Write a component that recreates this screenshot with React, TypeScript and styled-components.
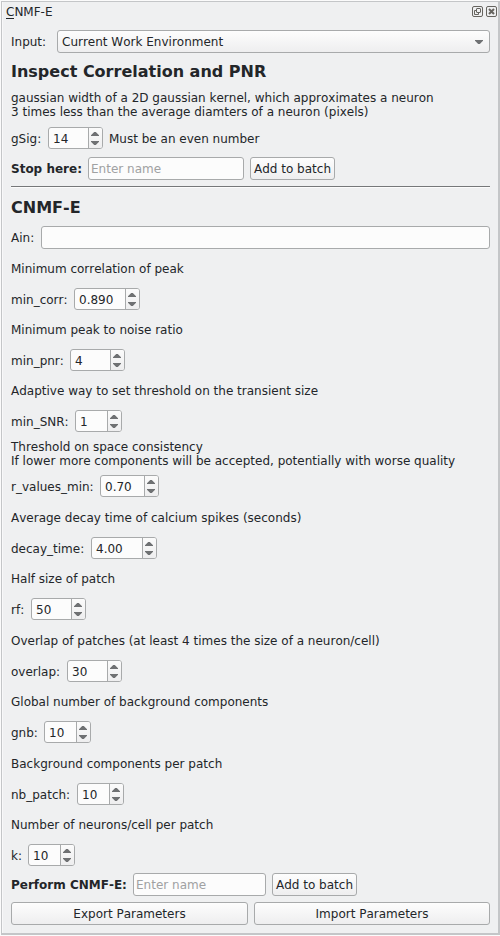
import React from 'react';
import styled, { createGlobalStyle } from 'styled-components';

const GlobalStyle = createGlobalStyle`
  *, *::before, *::after { box-sizing: border-box; }
  body {
    margin: 0;
    background: #eff0f1;
    color: #232629;
    font: 12px/14px "DejaVu Sans", sans-serif;
    font-kerning: none;
  }
`;

const Dock = styled.main`
  width: 500px;
  height: 936px;
  padding: 1px 0 1px 1px;
  background: #fbfbfb;
`;

const Panel = styled.div`
  display: flex;
  flex-direction: column;
  height: 934px;
  border: 1px solid #c4c6c8;
  border-right-width: 2px;
  border-bottom-width: 2px;
  background: #eff0f1;
  box-shadow: inset 1px 0 #f8f8f9;
  padding: 3px 8px 0 9px;
`;

const TitleBar = styled.header`
  display: flex;
  justify-content: space-between;
  height: 14px;
  margin: 0 -7px 0 -5px;
`;

const Title = styled.span`
  line-height: 14px;
`;

const Mnemonic = styled.span`
  display: inline-block;
  height: 13px;
  box-shadow: 0 1px #232629;
`;

const TitleButtons = styled.div`
  display: flex;
  gap: 3px;
  padding-top: 1px;
`;

const Label = styled.label<{ $width: number; $bold?: boolean }>`
  flex: none;
  width: ${(p) => p.$width}px;
  font-weight: ${(p) => (p.$bold ? 700 : 400)};
  white-space: nowrap;
`;

const Note = styled.span`
  margin-left: 6px;
`;

const Row = styled.div<{ $top: number; $tall?: boolean }>`
  display: flex;
  flex: none;
  align-items: center;
  height: ${(p) => (p.$tall ? 23 : 22)}px;
  margin-top: ${(p) => p.$top}px;
  line-height: ${(p) => (p.$tall ? 14 : 16)}px;
  ${Label}, ${Note} { padding-top: ${(p) => (p.$tall ? 0 : 2)}px; }
`;

const Heading = styled.h1<{ $top: number }>`
  flex: none;
  margin: ${(p) => p.$top}px 0 0;
  font-size: 16px;
  line-height: 19px;
  height: 19px;
`;

const Description = styled.p<{ $top: number }>`
  flex: none;
  margin: ${(p) => p.$top}px 0 0;
  white-space: pre-line;
`;

const Select = styled.div`
  display: flex;
  flex: 1;
  align-items: center;
  justify-content: space-between;
  height: 23px;
  padding: 0 6px 0 4px;
  border: 1px solid #a8aaab;
  border-radius: 3px;
  background: linear-gradient(#fdfdfd, #eeeeef);
`;

const TextInput = styled.input<{ $width?: number }>`
  flex: ${(p) => (p.$width ? 'none' : 1)};
  width: ${(p) => (p.$width ? `${p.$width}px` : 'auto')};
  min-width: 0;
  height: 23px;
  padding: 0 2px;
  border: 1px solid #a8aaab;
  border-radius: 3px;
  outline: 0;
  background: #fcfcfc;
  color: #232629;
  font: inherit;
  &::placeholder { color: #a0a1a2; opacity: 1; }
`;

const Button = styled.button<{ $width: number }>`
  flex: none;
  width: ${(p) => p.$width}px;
  height: 23px;
  margin-left: 6px;
  padding: 0;
  border: 1px solid #a8aaab;
  border-radius: 3px;
  background: linear-gradient(#fdfdfd, #eeeeef);
  color: #232629;
  font: inherit;
  &:first-child { margin-left: 0; }
`;

const Divider = styled.hr`
  flex: none;
  width: 479px;
  height: 2px;
  margin: 6px 0 0;
  border: 0;
  border-top: 1px solid #76787a;
  background: #fcfcfc;
`;

const SpinBox = styled.div<{ $width: number }>`
  display: flex;
  flex: none;
  width: ${(p) => p.$width}px;
  height: 22px;
  border: 1px solid #a8aaab;
  border-radius: 3px;
  background: #fcfcfc;
  overflow: hidden;
`;

const SpinValue = styled.span`
  flex: 1;
  padding: 3px 0 0 4px;
`;

const SpinArrows = styled.span`
  width: 14px;
  border-left: 1px solid #a8aaab;
  background: linear-gradient(#fbfbfb, #eeeeef);
`;

const Svg = styled.svg`
  display: block;
  flex: none;
`;

function Spin({ value, width }: { value: string; width: number }) {
  return (
    <SpinBox $width={width}>
      <SpinValue>{value}</SpinValue>
      <SpinArrows>
        <Svg width="13" height="20" viewBox="0 0 13 20" fill="#6f7173">
          <path d="M2 8V7.2L5.2 4h1.6L10 7.2V8zM2 13v.8L5.2 17h1.6L10 13.8V13z" />
        </Svg>
      </SpinArrows>
    </SpinBox>
  );
}

type Param = {
  text: string;
  textTop: number;
  top: number;
  name: string;
  labelWidth: number;
  value: string;
  width: number;
};

const params: Param[] = [
  { text: 'Minimum correlation of peak', textTop: 13, top: 12, name: 'min_corr:', labelWidth: 63, value: '0.890', width: 66 },
  { text: 'Minimum peak to noise ratio', textTop: 13, top: 12, name: 'min_pnr:', labelWidth: 59, value: '4', width: 55 },
  { text: 'Adaptive way to set threshold on the transient size', textTop: 13, top: 12, name: 'min_SNR:', labelWidth: 64, value: '1', width: 47 },
  { text: 'Threshold on space consistency\nIf lower more components will be accepted, potentially with worse quality', textTop: 8, top: 7, name: 'r_values_min:', labelWidth: 89, value: '0.70', width: 59 },
  { text: 'Average decay time of calcium spikes (seconds)', textTop: 14, top: 12, name: 'decay_time:', labelWidth: 80, value: '4.00', width: 66 },
  { text: 'Half size of patch', textTop: 13, top: 12, name: 'rf:', labelWidth: 20, value: '50', width: 55 },
  { text: 'Overlap of patches (at least 4 times the size of a neuron/cell)', textTop: 14, top: 12, name: 'overlap:', labelWidth: 56, value: '30', width: 55 },
  { text: 'Global number of background components', textTop: 13, top: 12, name: 'gnb:', labelWidth: 33, value: '10', width: 47 },
  { text: 'Background components per patch', textTop: 14, top: 12, name: 'nb_patch:', labelWidth: 66, value: '10', width: 47 },
  { text: 'Number of neurons/cell per patch', textTop: 13, top: 12, name: 'k:', labelWidth: 17, value: '10', width: 47 },
];

export default function App() {
  return (
    <>
      <GlobalStyle />
      <Dock>
        <Panel>
          <TitleBar>
            <Title><Mnemonic>C</Mnemonic>NMF-E</Title>
            <TitleButtons>
              <Svg width="11" height="11" viewBox="0 0 11 11" fill="none" stroke="#66645f">
                <rect x=".5" y=".5" width="10" height="10" rx="1.5" />
                <rect x="4.5" y="2.5" width="4" height="4" rx=".5" />
                <path d="M4.5 4.5h-2v4h4v-2" />
              </Svg>
              <Svg width="11" height="11" viewBox="0 0 11 11" fill="none" stroke="#66645f">
                <rect x=".5" y=".5" width="10" height="10" rx="1.5" />
                <path d="M3 3l5 5M8 3L3 8" strokeWidth="2" />
              </Svg>
            </TitleButtons>
          </TitleBar>

          <Row $top={11} $tall>
            <Label $width={46}>Input:</Label>
            <Select>
              Current Work Environment
              <Svg width="8" height="4" viewBox="0 0 8 4" fill="#6f7173">
                <path d="M0 0h8v.8L4.8 4H3.2L0 .8z" />
              </Svg>
            </Select>
          </Row>

          <Heading $top={9}>Inspect Correlation and PNR</Heading>
          <Description $top={10}>
            {'gaussian width of a 2D gaussian kernel, which approximates a neuron\n3 times less than the average diamters of a neuron (pixels)'}
          </Description>
          <Row $top={8}>
            <Label $width={37}>gSig:</Label>
            <Spin value="14" width={55} />
            <Note>Must be an even number</Note>
          </Row>
          <Row $top={8} $tall>
            <Label $width={77} $bold>Stop here:</Label>
            <TextInput $width={156} placeholder="Enter name" />
            <Button $width={85}>Add to batch</Button>
          </Row>
          <Divider />

          <Heading $top={10}>CNMF-E</Heading>
          <Row $top={9} $tall>
            <Label $width={30}>Ain:</Label>
            <TextInput />
          </Row>

          {params.map((p) => (
            <React.Fragment key={p.name}>
              <Description $top={p.textTop}>{p.text}</Description>
              <Row $top={p.top}>
                <Label $width={p.labelWidth}>{p.name}</Label>
                <Spin value={p.value} width={p.width} />
              </Row>
            </React.Fragment>
          ))}

          <Row $top={7} $tall>
            <Label $width={122} $bold>Perform CNMF-E:</Label>
            <TextInput $width={133} placeholder="Enter name" />
            <Button $width={85}>Add to batch</Button>
          </Row>
          <Row $top={6} $tall>
            <Button $width={237}>Export Parameters</Button>
            <Button $width={236}>Import Parameters</Button>
          </Row>
        </Panel>
      </Dock>
    </>
  );
}
